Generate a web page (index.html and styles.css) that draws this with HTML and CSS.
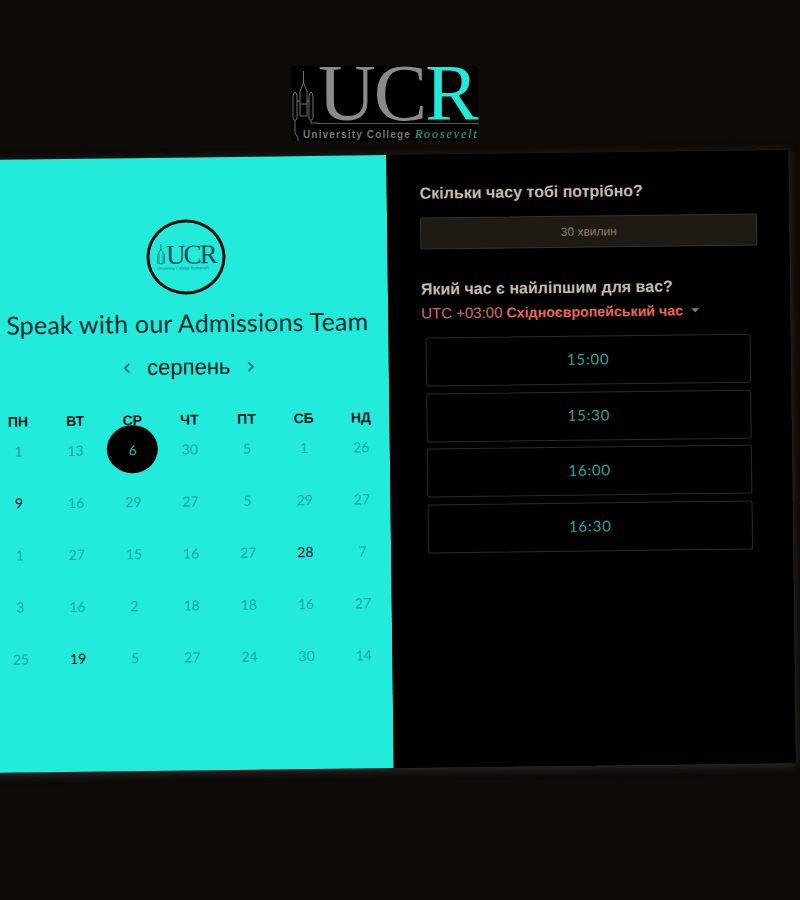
FILE: index.html
```html
<!DOCTYPE html>
<html lang="uk">
<head>
  <meta charset="UTF-8">
  <title>Speak with our Admissions Team</title>
  <link rel="stylesheet" href="styles.css">
</head>
<body>
  <header class="top">
    <div class="brand">
      <svg class="tower" viewBox="0 0 27 75" fill="none" stroke="#8c8c8c" stroke-width="0.8">
        <path d="M12.5 5V17M12.5 17L9 25V50H16V25L12.5 17M9 38H16"/>
        <path d="M2 30Q4 22 6 30V52Q4 57 2 52Z"/>
        <path d="M18 30Q20 22 22 30V52Q20 57 18 52Z"/>
        <path d="M6 35H9M16 35H18"/>
        <path d="M4 55V67L7 72V75"/>
        <path d="M20 55V57H27"/>
      </svg>
      <div class="brand-text">
        <div class="brand-mark">UC<span class="brand-r">R</span></div>
        <div class="brand-tag">University College <em>Roosevelt</em></div>
      </div>
    </div>
  </header>

  <main class="card">
    <section class="calendar">
      <div class="seal">
        <svg class="seal-tower" viewBox="0 0 9 22" fill="none" stroke="#0f6f72" stroke-width="0.8">
          <path d="M4.5 0V5L2.5 9V20H6.5V9L4.5 5M1 10V20M8 10V20"/>
        </svg>
        <div class="seal-text">
          <div class="seal-mark">UCR</div>
          <div class="seal-tag">University College Roosevelt</div>
        </div>
      </div>
      <h1 class="title">Speak with our Admissions Team</h1>
      <div class="month">
        <svg class="arrow" viewBox="0 0 8 12" fill="none" stroke="#12807f" stroke-width="2"><path d="M6.5 1.5L2 6l4.500 4.500"/></svg>
        <span class="month-name">серпень</span>
        <svg class="arrow" viewBox="0 0 8 12" fill="none" stroke="#12807f" stroke-width="2"><path d="M1.500 1.500L6 6l-4.500 4.500"/></svg>
      </div>
      <div class="weekdays">
        <span>ПН</span><span>ВТ</span><span>СР</span><span>ЧТ</span><span>ПТ</span><span>СБ</span><span>НД</span>
      </div>
      <div class="dates">
        <div>1</div><div>13</div><div><b class="picked">6</b></div><div>30</div><div>5</div><div>1</div><div>26</div>
        <div class="open">9</div><div>16</div><div>29</div><div>27</div><div>5</div><div>29</div><div>27</div>
        <div>1</div><div>27</div><div>15</div><div>16</div><div>27</div><div class="open">28</div><div>7</div>
        <div>3</div><div>16</div><div>2</div><div>18</div><div>18</div><div>16</div><div>27</div>
        <div>25</div><div class="open">19</div><div>5</div><div>27</div><div>24</div><div>30</div><div>14</div>
      </div>
    </section>

    <section class="booking">
      <h2 class="question">Скільки часу тобі потрібно?</h2>
      <div class="duration">30 хвилин</div>
      <h2 class="question second">Який час є найліпшим для вас?</h2>
      <div class="zone">UTC +03:00 <b>Східноєвропейський час</b><i class="caret"></i></div>
      <div class="slots">
        <div class="slot">15:00</div>
        <div class="slot">15:30</div>
        <div class="slot">16:00</div>
        <div class="slot">16:30</div>
      </div>
    </section>
  </main>
</body>
</html>
```

FILE: styles.css
```css
body{
  margin: 0;
  height: 900px;
  overflow: hidden;
  background-color: #0d0a08;
  font-family: "Liberation Sans", Arial, sans-serif;
}

/* logo above the card */
.top{
  height: 155px;
  padding-top: 66px;
  box-sizing: border-box;
  display: flex;
  justify-content: center;
}
.brand{
  width: 187px;
  height: 75px;
  margin-left: -31px;
  display: flex;
  background-color: #000;
}
.tower{
  width: 27px;
  height: 75px;
  flex-shrink: 0;
}
.brand-text{
  flex: 1;
}
.brand-mark{
  height: 57px;
  border-bottom: 1px solid #555;
  font-family: "Liberation Serif", serif;
  font-size: 80px;
  line-height: 55px;
  letter-spacing: -2px;
  color: #8a8a8a;
  white-space: nowrap;
}
.brand-r{
  color: #22ead9;
}
.brand-tag{
  margin: 3px 0 0 -15px;
  font-size: 10px;
  font-weight: bold;
  letter-spacing: 1.15px;
  color: #777;
  white-space: nowrap;
}
.brand-tag em{
  font-family: "Liberation Serif", serif;
  font-size: 12px;
  font-weight: normal;
  letter-spacing: 1.9px;
  color: #1fb5aa;
}

/* the whole card is tilted */
.card{
  width: 802px;
  height: 613px;
  margin-left: -10px;
  display: grid;
  grid-template-columns: 400px 402px;
  transform: rotate(-0.7deg);
  box-shadow: 0 2px 10px rgba(90, 90, 90, .5);
}

.calendar{
  padding-top: 62px;
  background-color: #22ebdc;
}
.seal{
  width: 79px;
  height: 75px;
  margin-left: 159px;
  box-sizing: border-box;
  border: 3px solid #0a0a0a;
  border-radius: 50%;
  display: flex;
  justify-content: center;
  align-items: center;
  gap: 1px;
}
.seal-tower{
  width: 9px;
  height: 22px;
  margin-top: -6px;
}
.seal-mark{
  font-family: "Liberation Serif", serif;
  font-size: 27px;
  line-height: 20px;
  letter-spacing: -2px;
  color: #0b4f55;
}
.seal-tag{
  margin: 1px 0 0 -9px;
  font-size: 4px;
  line-height: 5px;
  color: #13777a;
  white-space: nowrap;
}
.title{
  margin: 13px 0 0;
  padding-right: 2px;
  font-family: Lato, sans-serif;
  font-size: 25px;
  font-weight: normal;
  line-height: 30px;
  letter-spacing: .2px;
  text-align: center;
  color: #0a2a30;
  white-space: nowrap;
}
.month{
  margin-top: 15px;
  height: 30px;
  display: flex;
  justify-content: center;
  align-items: center;
  gap: 16px;
}
.month-name{
  font-size: 22px;
  color: #071c20;
}
.arrow{
  width: 8px;
  height: 12px;
}
.weekdays,
.dates{
  display: grid;
  grid-template-columns: repeat(7, 1fr);
  text-align: center;
}
.weekdays{
  margin-top: 27px;
  font-size: 14px;
  font-weight: bold;
  line-height: 20px;
  color: #07181c;
}
.dates{
  grid-auto-rows: 38px;
  row-gap: 14px;
  font-family: Lato, sans-serif;
  font-size: 14px;
  color: #17a8a3;
}
.dates div{
  display: flex;
  justify-content: center;
  align-items: center;
}
.dates .open{
  font-weight: 500;
  color: #07181c;
}
.picked{
  flex-shrink: 0;
  width: 51px;
  height: 48px;
  border-radius: 50%;
  background-color: #000;
  display: flex;
  justify-content: center;
  align-items: center;
  font-weight: normal;
  color: #22b8ad;
}

.booking{
  padding: 30px 32px 0 33px;
  background-color: #000;
}
.question{
  margin: 0;
  font-size: 16px;
  line-height: 18px;
  color: #c6bcac;
}
.second{
  margin-top: 31px;
}
.duration{
  margin-top: 15px;
  height: 32px;
  box-sizing: border-box;
  border: 1px solid #38322a;
  border-radius: 2px;
  background-color: #1e1a14;
  font-size: 12px;
  line-height: 30px;
  text-align: center;
  color: #8a7f6e;
}
.zone{
  margin-top: 6px;
  display: flex;
  align-items: center;
  gap: 4px;
  font-size: 15px;
  line-height: 18px;
  color: #d8705f;
}
.zone b{
  font-size: 14.200px;
  color: #e8695a;
}
.caret{
  margin-left: 4px;
  border-top: 4px solid #8a7a70;
  border-left: 4px solid transparent;
  border-right: 4px solid transparent;
}
.slots{
  margin: 15px 0 0 4px;
  width: 325px;
  display: flex;
  flex-direction: column;
  gap: 6.700px;
}
.slot{
  height: 49px;
  box-sizing: border-box;
  border: 1px solid #2b2b2b;
  border-radius: 3px;
  font-family: Lato, sans-serif;
  font-size: 15px;
  line-height: 45px;
  letter-spacing: .8px;
  text-align: center;
  color: #2ba69e;
}
```
